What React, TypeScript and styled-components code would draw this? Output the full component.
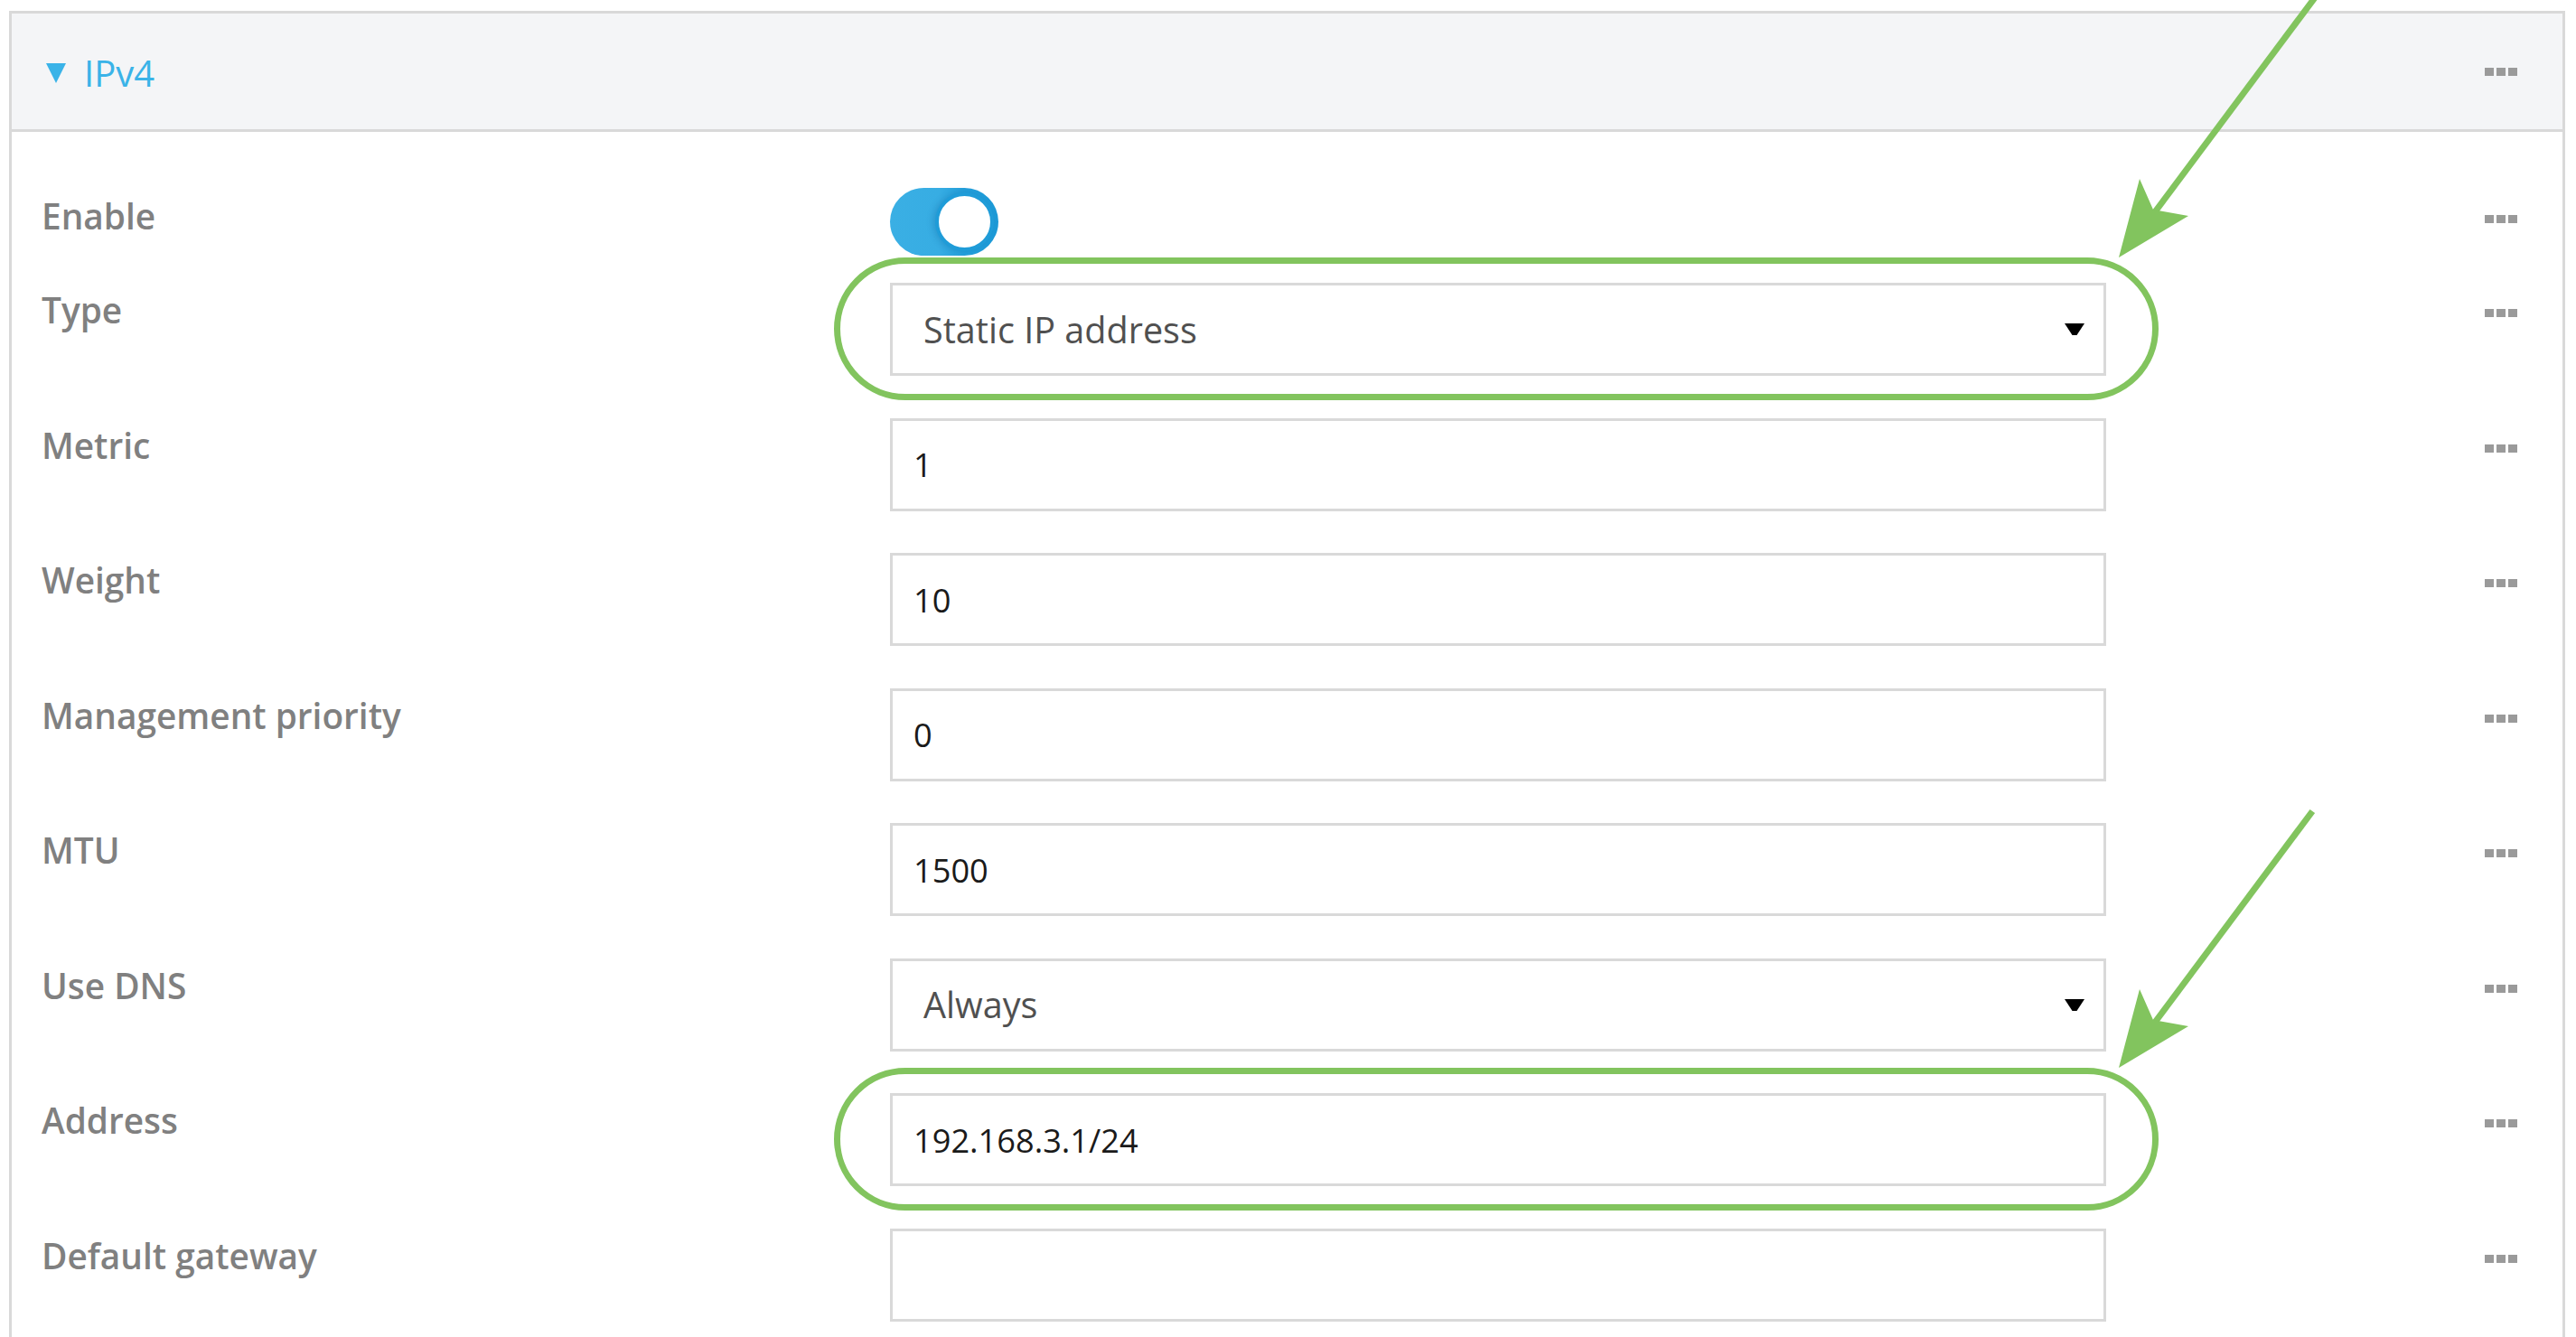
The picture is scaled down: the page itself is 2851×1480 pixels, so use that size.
import React from "react";
import styled, { createGlobalStyle, css } from "styled-components";

const GlobalStyle = createGlobalStyle`
  html, body {
    margin: 0;
    padding: 0;
    background: #ffffff;
    overflow: hidden;
  }
  body {
    font-family: "Open Sans", "Noto Sans", Arial, sans-serif;
  }
`;

const GREEN = "#82c45e";
const BORDER = "#d9d9d9";

const Page = styled.div`
  position: relative;
  width: 2851px;
  height: 1480px;
  overflow: hidden;
  box-sizing: border-box;
  padding: 12px 12px 0 10px;
`;

const Panel = styled.section`
  border: 3px solid ${BORDER};
  border-bottom: none;
  background: #ffffff;
`;

const Header = styled.header`
  display: grid;
  grid-template-columns: 1fr 36px;
  align-items: center;
  height: 128px;
  padding: 0 50px 0 38px;
  background: #f4f5f7;
  border-bottom: 3px solid ${BORDER};
`;

const Title = styled.div`
  display: flex;
  align-items: center;
  gap: 20px;
  color: #3ab3e8;
  font-size: 40px;
  font-weight: 400;
  line-height: 1;
  padding-top: 4px;
`;

const Body = styled.div`
  display: flex;
  flex-direction: column;
  padding: 62px 0 120px 0;
`;

const Row = styled.div<{ $after: number }>`
  display: grid;
  grid-template-columns: 939px 1346px 1fr 36px;
  align-items: start;
  padding: 0 50px ${(p) => p.$after}px 33px;
`;

const Label = styled.div<{ $top: number }>`
  padding-top: ${(p) => p.$top}px;
  font-size: 38.8px;
  line-height: 52px;
  font-weight: 600;
  color: #808080;
  white-space: nowrap;
`;

const ControlCell = styled.div<{ $highlight?: boolean }>`
  position: relative;
  ${(p) =>
    p.$highlight &&
    css`
      &::after {
        content: "";
        position: absolute;
        top: -28px;
        bottom: -27px;
        left: -62px;
        right: -58px;
        border: 7px solid ${GREEN};
        border-radius: 80px;
        pointer-events: none;
      }
    `}
`;

const fieldBase = css`
  box-sizing: border-box;
  width: 100%;
  height: 103px;
  border: 3px solid ${BORDER};
  background: #ffffff;
  display: flex;
  align-items: center;
`;

const TextField = styled.div`
  ${fieldBase};
  padding-left: 23px;
  font-size: 36.2px;
  color: #1a1a1a;
  font-weight: 400;
`;

const SelectField = styled.div`
  ${fieldBase};
  justify-content: space-between;
  padding: 0 21px 0 34px;
  font-size: 39.6px;
  color: #505050;
  font-weight: 400;
`;

const Toggle = styled.div`
  box-sizing: border-box;
  width: 120px;
  height: 75px;
  border-radius: 38px;
  padding: 5px;
  display: flex;
  justify-content: flex-end;
  background: linear-gradient(90deg, #3aafe4 0%, #37ade3 45%, #239fdb 70%, #1c9ad7 100%);
`;

const Knob = styled.span`
  box-sizing: border-box;
  width: 65px;
  height: 65px;
  border-radius: 50%;
  background: #ffffff;
  border: 4px solid #1f9cd8;
  box-shadow: -3px 0 6px rgba(10, 90, 150, 0.25);
`;

const DotsCell = styled.div<{ $top: number }>`
  padding-top: ${(p) => p.$top}px;
  display: flex;
  justify-content: flex-end;
`;

const Dots = styled.span`
  display: flex;
  gap: 3px;
`;

const Dot = styled.span`
  width: 10px;
  height: 9px;
  background: #9a9a9a;
`;

const Overlay = styled.svg`
  position: absolute;
  top: 0;
  left: 0;
  pointer-events: none;
`;

const MoreDots = () => (
  <Dots>
    <Dot />
    <Dot />
    <Dot />
  </Dots>
);

const Caret = () => (
  <svg width="22" height="13" viewBox="0 0 22 13">
    <polygon points="0,0 22,0 13.5,13 8.5,13" fill="#000" />
  </svg>
);

const Arrow = ({ dy, startY }: { dy: number; startY: number }) => {
  // line runs from the notch of the head up and to the right
  const x2 = 2378;
  const y2 = 244;
  const slope = 194 / 260;
  const x1 = x2 + (y2 - startY) * slope;
  return (
    <g transform={`translate(0 ${dy})`}>
      <line x1={x1} y1={startY} x2={x2} y2={y2} stroke={GREEN} strokeWidth="7" />
      <polygon points="2345,285 2368,198 2383,232 2422,239" fill={GREEN} />
    </g>
  );
};

type Field = {
  label: string;
  kind: "select" | "input";
  value: string;
  highlight?: boolean;
};

const fields: Field[] = [
  { label: "Type", kind: "select", value: "Static IP address", highlight: true },
  { label: "Metric", kind: "input", value: "1" },
  { label: "Weight", kind: "input", value: "10" },
  { label: "Management priority", kind: "input", value: "0" },
  { label: "MTU", kind: "input", value: "1500" },
  { label: "Use DNS", kind: "select", value: "Always" },
  { label: "Address", kind: "input", value: "192.168.3.1/24", highlight: true },
  { label: "Default gateway", kind: "input", value: "" },
];

export default function App() {
  return (
    <>
      <GlobalStyle />
      <Page>
        <Panel>
          <Header>
            <Title>
              <svg width="22" height="22" viewBox="0 0 22 22">
                <polygon points="0,0 22,0 11,22" fill="#3ab3e8" />
              </svg>
              IPv4
            </Title>
            <MoreDots />
          </Header>
          <Body>
            <Row $after={30}>
              <Label $top={5}>Enable</Label>
              <ControlCell>
                <Toggle>
                  <Knob />
                </Toggle>
              </ControlCell>
              <span />
              <DotsCell $top={30}>
                <MoreDots />
              </DotsCell>
            </Row>
            {fields.map((f, i) => (
              <Row key={f.label} $after={i === fields.length - 1 ? 0 : 46.5}>
                <Label $top={4}>{f.label}</Label>
                <ControlCell $highlight={f.highlight}>
                  {f.kind === "select" ? (
                    <SelectField>
                      <span>{f.value}</span>
                      <Caret />
                    </SelectField>
                  ) : (
                    <TextField>{f.value}</TextField>
                  )}
                </ControlCell>
                <span />
                <DotsCell $top={29}>
                  <MoreDots />
                </DotsCell>
              </Row>
            ))}
          </Body>
        </Panel>
        <Overlay width="2851" height="1480" viewBox="0 0 2851 1480">
          <Arrow dy={0} startY={-16} />
          <Arrow dy={897} startY={1} />
        </Overlay>
      </Page>
    </>
  );
}
